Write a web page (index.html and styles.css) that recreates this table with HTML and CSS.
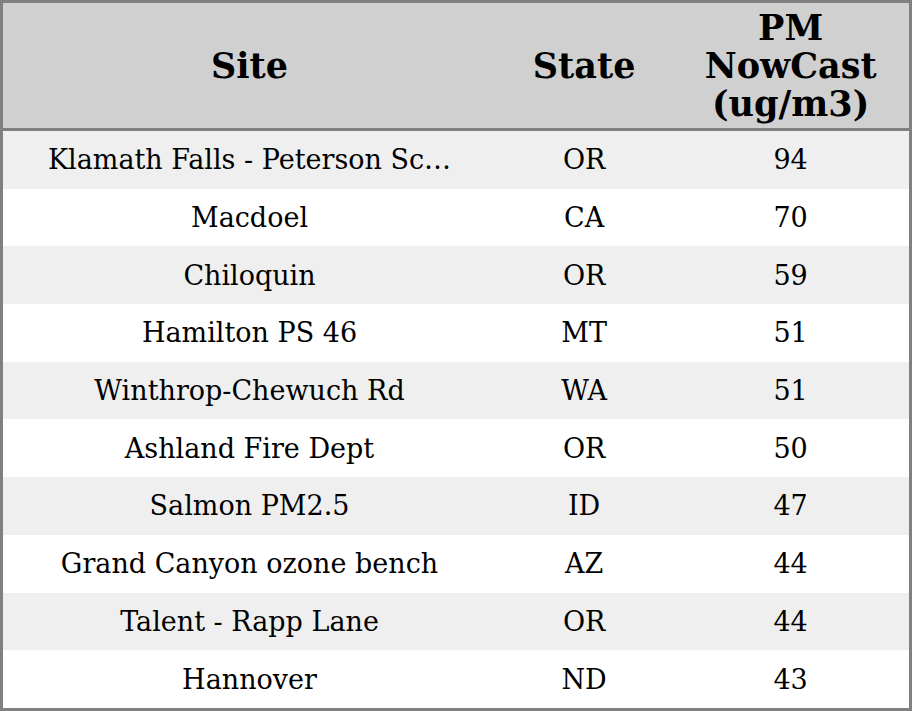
FILE: index.html
```html
<!DOCTYPE html>
<html>
<head>
<meta charset="utf-8">
<link rel="stylesheet" href="styles.css">
</head>
<body>
<table class="aq">
  <colgroup>
    <col class="c-site">
    <col class="c-state">
    <col class="c-pm">
  </colgroup>
  <thead>
    <tr><th>Site</th><th>State</th><th>PM<br>NowCast<br>(ug/m3)</th></tr>
  </thead>
  <tbody>
    <tr><td>Klamath Falls - Peterson Sc…</td><td>OR</td><td>94</td></tr>
    <tr><td>Macdoel</td><td>CA</td><td>70</td></tr>
    <tr><td>Chiloquin</td><td>OR</td><td>59</td></tr>
    <tr><td>Hamilton PS 46</td><td>MT</td><td>51</td></tr>
    <tr><td>Winthrop-Chewuch Rd</td><td>WA</td><td>51</td></tr>
    <tr><td>Ashland Fire Dept</td><td>OR</td><td>50</td></tr>
    <tr><td>Salmon PM2.5</td><td>ID</td><td>47</td></tr>
    <tr><td>Grand Canyon ozone bench</td><td>AZ</td><td>44</td></tr>
    <tr><td>Talent - Rapp Lane</td><td>OR</td><td>44</td></tr>
    <tr><td>Hannover</td><td>ND</td><td>43</td></tr>
  </tbody>
</table>
</body>
</html>
```

FILE: styles.css
```css
html, body {
  margin: 0;
  padding: 0;
  background: #ffffff;
}
.aq {
  width: 912px;
  height: 711px;
  border-collapse: collapse;
  border: 3px solid #808080;
  font-family: "DejaVu Serif", serif;
  color: #000;
  table-layout: fixed;
}
.c-site { width: 494px; }
.c-state { width: 176px; }
.c-pm { width: 238px; }
.aq th {
  background: #d0d0d0;
  font-size: 35px;
  font-weight: bold;
  line-height: 38px;
  height: 125px;
  padding: 0;
  text-align: center;
  vertical-align: middle;
  border-bottom: 3px solid #808080;
}
.aq td {
  font-size: 27px;
  height: 57px;
  padding: 0;
  text-align: center;
  vertical-align: middle;
  white-space: nowrap;
  overflow: hidden;
}
.aq tbody tr:nth-child(odd) td {
  background: #efefef;
}
```
